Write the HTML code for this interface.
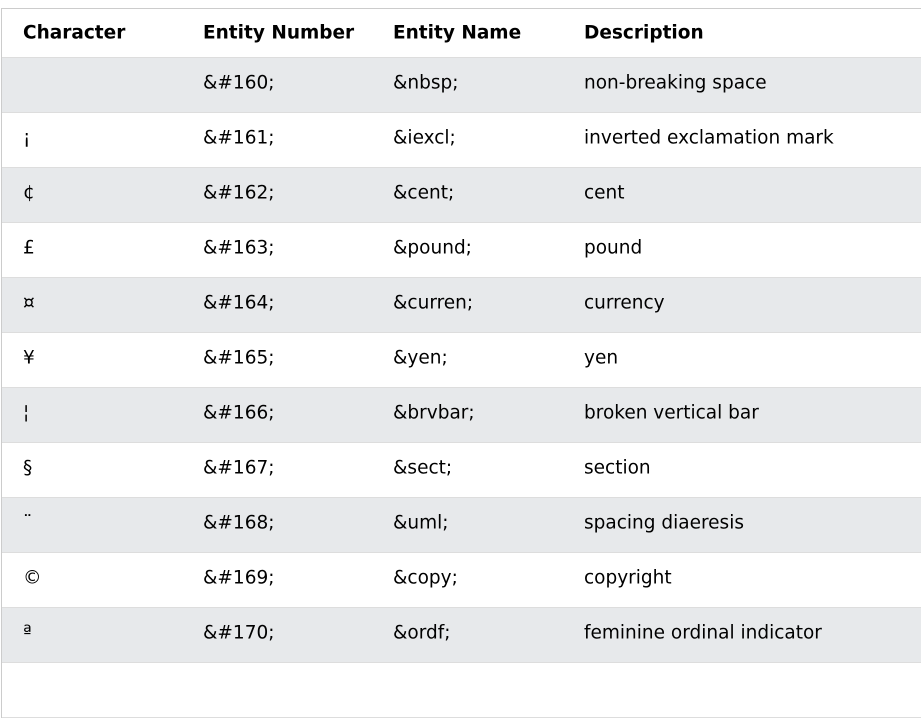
<!DOCTYPE html>
<html><head><style>
body{margin:0;background:#fff;font-family:"DejaVu Sans",Verdana,sans-serif;font-size:18.5px;color:#000}
.wrap{position:absolute;left:1px;top:8px;width:930px;border-top:1px solid #ccc;border-left:1px solid #ccc}
.r{height:54px;border-bottom:1px solid #ddd;position:relative}
.r.g{background:#e7e9eb}
.r.h{height:48px;font-weight:bold;font-size:18.5px}
.r span{position:absolute;top:50%;transform:translateY(-50%);white-space:nowrap;margin-top:-2px}
.r.h span{margin-top:0}
.c1{left:21px}.c2{left:201px}.c3{left:391px}.c4{left:582px}
</style></head><body>
<div class="wrap">
<div class="r h"><span class="c1">Character</span><span class="c2">Entity Number</span><span class="c3">Entity Name</span><span class="c4">Description</span></div>
<div class="r g"><span class="c1">&nbsp;</span><span class="c2">&amp;#160;</span><span class="c3">&amp;nbsp;</span><span class="c4">non-breaking space</span></div>
<div class="r"><span class="c1">¡</span><span class="c2">&amp;#161;</span><span class="c3">&amp;iexcl;</span><span class="c4">inverted exclamation mark</span></div>
<div class="r g"><span class="c1">¢</span><span class="c2">&amp;#162;</span><span class="c3">&amp;cent;</span><span class="c4">cent</span></div>
<div class="r"><span class="c1">£</span><span class="c2">&amp;#163;</span><span class="c3">&amp;pound;</span><span class="c4">pound</span></div>
<div class="r g"><span class="c1">¤</span><span class="c2">&amp;#164;</span><span class="c3">&amp;curren;</span><span class="c4">currency</span></div>
<div class="r"><span class="c1">¥</span><span class="c2">&amp;#165;</span><span class="c3">&amp;yen;</span><span class="c4">yen</span></div>
<div class="r g"><span class="c1">¦</span><span class="c2">&amp;#166;</span><span class="c3">&amp;brvbar;</span><span class="c4">broken vertical bar</span></div>
<div class="r"><span class="c1">§</span><span class="c2">&amp;#167;</span><span class="c3">&amp;sect;</span><span class="c4">section</span></div>
<div class="r g"><span class="c1">¨</span><span class="c2">&amp;#168;</span><span class="c3">&amp;uml;</span><span class="c4">spacing diaeresis</span></div>
<div class="r"><span class="c1">©</span><span class="c2">&amp;#169;</span><span class="c3">&amp;copy;</span><span class="c4">copyright</span></div>
<div class="r g"><span class="c1">ª</span><span class="c2">&amp;#170;</span><span class="c3">&amp;ordf;</span><span class="c4">feminine ordinal indicator</span></div>
<div class="r"></div>
</div>
</body></html>
